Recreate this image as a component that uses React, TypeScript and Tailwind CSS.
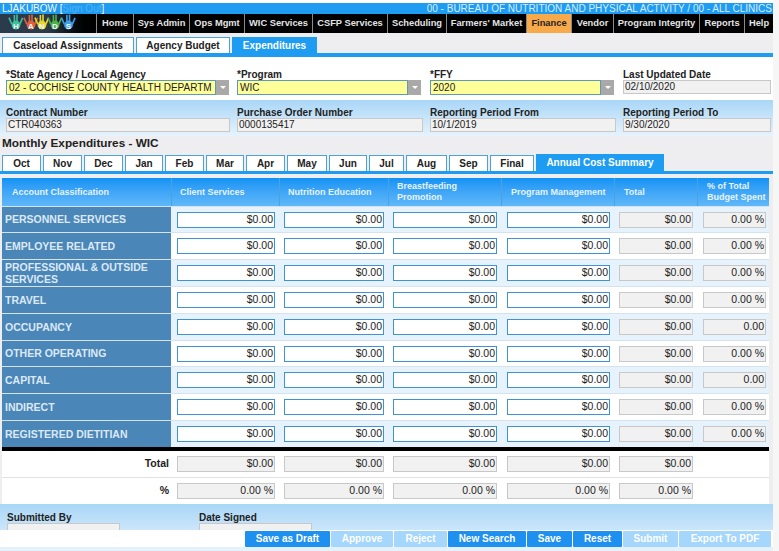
const navItems = [
  { label: "Home", w: "w-[37px]" },
  { label: "Sys Admin", w: "w-[56px]" },
  { label: "Ops Mgmt", w: "w-[55px]" },
  { label: "WIC Services", w: "w-[68px]" },
  { label: "CSFP Services", w: "w-[75px]" },
  { label: "Scheduling", w: "w-[59px]" },
  { label: "Farmers' Market", w: "w-[80px]" },
  { label: "Finance", w: "w-[45px]", active: true },
  { label: "Vendor", w: "w-[42px]" },
  { label: "Program Integrity", w: "w-[86px]" },
  { label: "Reports", w: "w-[45px]" },
  { label: "Help", w: "w-[29px]" },
];

const months = [
  { label: "Oct", w: "w-[39px]" },
  { label: "Nov", w: "w-[39px]" },
  { label: "Dec", w: "w-[39px]" },
  { label: "Jan", w: "w-[38px]" },
  { label: "Feb", w: "w-[39px]" },
  { label: "Mar", w: "w-[38px]" },
  { label: "Apr", w: "w-[39px]" },
  { label: "May", w: "w-[40px]" },
  { label: "Jun", w: "w-[38px]" },
  { label: "Jul", w: "w-[35px]" },
  { label: "Aug", w: "w-[41px]" },
  { label: "Sep", w: "w-[39px]" },
  { label: "Final", w: "w-[44px]" },
];

const rows = [
  { name: "PERSONNEL SERVICES", pct: "0.00 %", h: "h-[26px]" },
  { name: "EMPLOYEE RELATED", pct: "0.00 %", h: "h-[27px]" },
  { name: "PROFESSIONAL & OUTSIDE SERVICES", pct: "0.00 %", h: "h-[27px]" },
  { name: "TRAVEL", pct: "0.00 %", h: "h-[27px]" },
  { name: "OCCUPANCY", pct: "0.00", h: "h-[27px]" },
  { name: "OTHER OPERATING", pct: "0.00 %", h: "h-[26px]" },
  { name: "CAPITAL", pct: "0.00", h: "h-[27px]" },
  { name: "INDIRECT", pct: "0.00 %", h: "h-[27px]" },
  { name: "REGISTERED DIETITIAN", pct: "0.00 %", h: "h-[27px]" },
];

const gridCols = "grid grid-cols-[169px_108px_109px_113px_113px_83px_72px]";

function HandsLogo() {
  const hands = [
    { x: 15, c: "#3fbf9a", l: "H" },
    { x: 30, c: "#e0603c", l: "A" },
    { x: 41, c: "#e8d62e", l: "N" },
    { x: 54, c: "#4fb04a", l: "D" },
    { x: 67.5, c: "#3f9fe8", l: "S" },
  ];
  return (
    <svg width="80" height="19" viewBox="0 0 80 19" className="shrink-0">
      {hands.map((h) => (
        <g key={h.l} fill={h.c}>
          <circle cx={h.x} cy="11" r="4.4" />
          <rect x={h.x - 5} y="3" width="1.6" height="7" transform={`rotate(-24 ${h.x - 4} 10)`} />
          <rect x={h.x - 2.4} y="1" width="1.6" height="7" />
          <rect x={h.x + 0.2} y="0.5" width="1.6" height="7" />
          <rect x={h.x + 3} y="3" width="1.6" height="7" transform={`rotate(24 ${h.x + 3} 10)`} />
          <text
            x={h.x}
            y="15"
            textAnchor="middle"
            fontSize="8"
            fontWeight="700"
            fontFamily="Liberation Sans, sans-serif"
            fill="#eef6ff"
          >
            {h.l}
          </text>
        </g>
      ))}
    </svg>
  );
}

function Field({
  value,
  kind = "readonly",
  className = "",
}: {
  value: string;
  kind?: "readonly" | "input";
  className?: string;
}) {
  return (
    <div
      className={`h-[16px] px-[1px] text-right text-[10.5px] leading-[13px] text-[#222] ${
        kind === "input"
          ? "border border-[#3d93d6] bg-white"
          : "border border-[#c8c8c8] bg-[#f1f1f1]"
      } ${className}`}
    >
      {value}
    </div>
  );
}

function SelectBox({ value, className }: { value: string; className: string }) {
  return (
    <div className={`flex h-[15px] ${className}`}>
      <div className="flex-1 overflow-hidden whitespace-nowrap border border-[#5b9bb5] bg-[#ffff99] px-[2px] text-[10px] leading-[13px] text-[#222]">
        {value}
      </div>
      <div className="flex w-[13px] items-center justify-center bg-[#a9a9a9]">
        <div className="h-0 w-0 border-x-[3px] border-t-[3px] border-x-transparent border-t-white" />
      </div>
    </div>
  );
}

function InfoField({ label, value, className }: { label: string; value: string; className: string }) {
  return (
    <div className={className}>
      <div className="text-[10px] font-bold leading-[11px] text-[#222]">{label}</div>
      <div className="h-[14px] border border-[#c8c8c8] bg-[#f1f1f1] px-[1px] text-[10px] leading-[12px] text-[#222]">
        {value}
      </div>
    </div>
  );
}

function ActionButton({ label, w, disabled }: { label: string; w: string; disabled?: boolean }) {
  return (
    <div
      className={`flex h-[16px] items-center justify-center rounded-[1px] text-[10px] font-bold text-white ${w} ${
        disabled ? "bg-[#a5d6fb]" : "bg-[#1e90f0]"
      }`}
    >
      {label}
    </div>
  );
}

export default function App() {
  return (
    <div className="relative h-[551px] w-[779px] overflow-hidden bg-[#f6f6f7] font-['Liberation_Sans',Arial,sans-serif]">
      <div className="flex h-full w-[773px] flex-col bg-[#eeeef0]">
        <div className="h-[3px] bg-white" />

        {/* ===== TOP BARS ===== */}
        <div className="flex h-[11px] items-center justify-between bg-[#1e9cf2] pl-[2px] pr-[1px] text-[10px] text-[#d8ecff]">
          <span className="text-[#f2f8ff]">
            LJAKUBOW [<span className="text-[#4fb0f5]">Sign Out</span>]
          </span>
          <span>00 - BUREAU OF NUTRITION AND PHYSICAL ACTIVITY / 00 - ALL CLINICS</span>
        </div>
        <div className="flex h-[19px] items-stretch bg-black">
          <div className="flex w-[96px] items-center bg-gradient-to-r from-[#2a3b4c] via-[#2c3a48] to-black pl-[1px]">
            <HandsLogo />
          </div>
          {navItems.map((item) => (
            <div
              key={item.label}
              className={`flex items-center justify-center whitespace-nowrap border-l border-[#8a8a8a] text-[9.3px] font-bold ${item.w} ${
                item.active ? "bg-[#f8a94a] text-[#222]" : "text-[#e4e4e4]"
              }`}
            >
              {item.label}
            </div>
          ))}
        </div>

        {/* ===== TABS ===== */}
        <div className="flex h-[20px] items-end gap-[2px] pl-[2px]">
          <div className="flex h-[16px] w-[132px] items-center justify-center border-x border-t border-[#4aa3e0] bg-white text-[10px] font-bold text-[#222]">
            Caseload Assignments
          </div>
          <div className="flex h-[16px] w-[94px] items-center justify-center border-x border-t border-[#4aa3e0] bg-white text-[10px] font-bold text-[#222]">
            Agency Budget
          </div>
          <div className="flex h-[16px] w-[85px] items-center justify-center bg-[#1e9cf2] text-[10px] font-bold text-white">
            Expenditures
          </div>
        </div>
        <div className="h-[4px] bg-[#1e9cf2]" />

        {/* ===== FILTERS ===== */}
        <div className="flex h-[43px] bg-white pl-[6px] pt-[12px]">
          <div className="w-[231px]">
            <div className="text-[10px] font-bold leading-[11px] text-[#222]">*State Agency / Local Agency</div>
            <SelectBox value="02 - COCHISE COUNTY HEALTH DEPARTM" className="w-[223px]" />
          </div>
          <div className="w-[193px]">
            <div className="text-[10px] font-bold leading-[11px] text-[#222]">*Program</div>
            <SelectBox value="WIC" className="w-[184px]" />
          </div>
          <div className="w-[193px]">
            <div className="text-[10px] font-bold leading-[11px] text-[#222]">*FFY</div>
            <SelectBox value="2020" className="w-[184px]" />
          </div>
          <InfoField label="Last Updated Date" value="02/10/2020" className="w-[148px]" />
        </div>

        {/* ===== CONTRACT INFO ===== */}
        <div className="flex h-[36px] bg-gradient-to-b from-[#a9d6f7] to-[#e6f3fc] pl-[6px] pt-[7px]">
          <InfoField label="Contract Number" value="CTR040363" className="mr-[7px] w-[224px]" />
          <InfoField label="Purchase Order Number" value="0000135417" className="mr-[7px] w-[186px]" />
          <InfoField label="Reporting Period From" value="10/1/2019" className="mr-[7px] w-[186px]" />
          <InfoField label="Reporting Period To" value="9/30/2020" className="w-[148px]" />
        </div>

        {/* ===== MONTHLY ===== */}
        <div className="h-[18px] pl-[2px] text-[11.8px] font-bold leading-[15px] text-[#222]">
          Monthly Expenditures - WIC
        </div>
        <div className="flex h-[17px] items-end gap-[2px] pl-[2px]">
          {months.map((m) => (
            <div
              key={m.label}
              className={`flex h-[16px] items-center justify-center border-x border-t border-[#4aa3e0] bg-white text-[10px] font-bold text-[#222] ${m.w}`}
            >
              {m.label}
            </div>
          ))}
          <div className="flex h-[17px] w-[128px] items-center justify-center bg-[#1e9cf2] text-[10px] font-bold text-white">
            Annual Cost Summary
          </div>
        </div>
        <div className="h-[3px] bg-[#1e9cf2]" />

        {/* ===== TABLE ===== */}
        <div className="mt-[4px] pl-[2px] pr-[4px]">
          <div className={`${gridCols} h-[28px] bg-gradient-to-b from-[#0e93f5] to-[#5fb8f8] text-[9px] font-bold leading-[11px] text-[#e6f3ff]`}>
            <div className="flex items-center pl-[10px]">Account Classification</div>
            <div className="flex items-center border-l border-[#4aa3e0] pl-[8px]">Client Services</div>
            <div className="flex items-center border-l border-[#4aa3e0] pl-[8px]">Nutrition Education</div>
            <div className="flex items-center border-l border-[#4aa3e0] pl-[8px]">
              Breastfeeding
              <br />
              Promotion
            </div>
            <div className="flex items-center border-l border-[#4aa3e0] pl-[9px]">Program Management</div>
            <div className="flex items-center border-l border-[#4aa3e0] pl-[9px]">Total</div>
            <div className="flex items-center border-l border-[#4aa3e0] pl-[9px]">
              % of Total
              <br />
              Budget Spent
            </div>
          </div>

          {rows.map((row, i) => (
            <div
              key={row.name}
              className={`${gridCols} ${row.h} items-center border-t border-[#d5e3ee] ${
                i % 2 === 0 ? "bg-[#e6f3fc]" : "bg-white"
              }`}
            >
              <div className="flex h-full items-center bg-[#4a86b8] pb-[1px] pl-[3px] text-[10.5px] font-bold leading-[12px] text-[#dce9f5]">
                {row.name}
              </div>
              <Field value="$0.00" kind="input" className="ml-[6px] mr-[4px]" />
              <Field value="$0.00" kind="input" className="ml-[5px] mr-[4px]" />
              <Field value="$0.00" kind="input" className="ml-[5px] mr-[4px]" />
              <Field value="$0.00" kind="input" className="ml-[6px] mr-[4px]" />
              <Field value="$0.00" className="ml-[5px] mr-[4px]" />
              <Field value={row.pct} className="ml-[6px] mr-[3px]" />
            </div>
          ))}

          <div className="h-[4px] bg-black" />

          <div className={`${gridCols} h-[27px] items-center border-b border-[#e2e2e2] bg-white`}>
            <div className="pr-[2px] text-right text-[10.5px] font-bold text-[#222]">Total</div>
            <Field value="$0.00" className="ml-[6px] mr-[4px]" />
            <Field value="$0.00" className="ml-[5px] mr-[4px]" />
            <Field value="$0.00" className="ml-[5px] mr-[4px]" />
            <Field value="$0.00" className="ml-[6px] mr-[4px]" />
            <Field value="$0.00" className="ml-[5px] mr-[4px]" />
          </div>
          <div className={`${gridCols} h-[26px] items-center bg-white`}>
            <div className="pr-[2px] text-right text-[10.5px] font-bold text-[#222]">%</div>
            <Field value="0.00 %" className="ml-[6px] mr-[4px]" />
            <Field value="0.00 %" className="ml-[5px] mr-[4px]" />
            <Field value="0.00 %" className="ml-[5px] mr-[4px]" />
            <Field value="0.00 %" className="ml-[6px] mr-[4px]" />
            <Field value="0.00 %" className="ml-[5px] mr-[4px]" />
          </div>
        </div>

        {/* ===== SIGNATURE ===== */}
        <div className="flex flex-1 gap-[79px] bg-gradient-to-b from-[#a9d6f7] to-[#e6f3fc] pl-[7px] pt-[8px]">
          <InfoField label="Submitted By" value="" className="w-[113px]" />
          <InfoField label="Date Signed" value="" className="w-[113px]" />
        </div>
      </div>

      {/* ===== ACTION BAR ===== */}
      <div className="absolute bottom-[4px] left-0 right-[6px] flex h-[17px] items-center justify-end gap-[1px] bg-white pr-[2px]">
        <ActionButton label="Save as Draft" w="w-[85px]" />
        <ActionButton label="Approve" w="w-[62px]" disabled />
        <ActionButton label="Reject" w="w-[53px]" disabled />
        <ActionButton label="New Search" w="w-[78px]" />
        <ActionButton label="Save" w="w-[45px]" />
        <ActionButton label="Reset" w="w-[49px]" />
        <ActionButton label="Submit" w="w-[55px]" disabled />
        <ActionButton label="Export To PDF" w="w-[92px]" disabled />
      </div>
    </div>
  );
}
